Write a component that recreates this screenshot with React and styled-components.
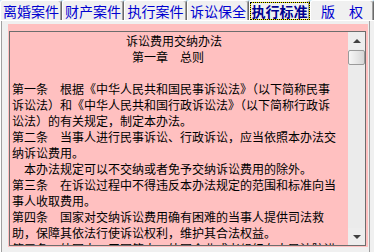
import React from 'react';
import styled, { createGlobalStyle, css } from 'styled-components';

const GlobalStyle = createGlobalStyle`
  html, body {
    margin: 0;
    padding: 0;
  }
  body {
    width: 374px;
    height: 252px;
    overflow: hidden;
    background: #f0f0f0;
    font-family: "Noto Sans CJK SC", "Noto Sans", sans-serif;
  }
`;

const Window = styled.div`
  width: 374px;
  height: 252px;
  display: flex;
  flex-direction: column;
  background: #f0f0f0;
`;

const TabStrip = styled.div`
  display: flex;
  height: 20px;
  flex-shrink: 0;
  background: #c6e6f6;
`;

const Tab = styled.div`
  width: ${({ $w }) => $w}px;
  box-sizing: border-box;
  display: flex;
  align-items: center;
  justify-content: center;
  background: #f0f0f0;
  border-top: 1px solid #ffffff;
  border-left: 1px solid #ffffff;
  border-right: 1px solid #6a6a6a;
  box-shadow: inset -1px 0 0 #a0a0a0;
  border-radius: 3px 3px 0 0;
  color: #0000d0;
  font-size: 14px;
  line-height: 16px;
  white-space: nowrap;
`;

const TabLabel = styled.span`
  padding: 0 1px;
  ${({ $active }) =>
    $active &&
    css`
      font-weight: bold;
      color: #000090;
      outline: 1px dotted #000000;
      box-shadow: 0 0 0 1px #f4f000;
    `}
`;

const Panel = styled.div`
  flex: 1;
  display: flex;
  padding: 4px 6px 5px 8px;
  box-shadow: inset 0 1px 0 #ffffff, inset 1px 0 0 #ffffff, inset 2px 0 0 #a0a0a0,
    inset -4px 0 0 #f0f0f0, inset -5px 0 0 #a0a0a0;
  min-height: 0;
`;

const PinkBox = styled.div`
  flex: 1;
  display: flex;
  background: #ffc0c0;
  padding: 7px 2px 1px 1px;
  min-height: 0;
`;

const TextArea = styled.div`
  flex: 1;
  display: flex;
  border: 1px solid #6d6d6d;
  background: #ffc0c0;
  min-height: 0;
  overflow: hidden;
`;

const TextBody = styled.div`
  flex: 1;
  padding: 1px 0 0 2px;
  overflow: hidden;
  font-size: 12px;
  line-height: 16px;
  color: #000000;
`;

const Line = styled.div`
  height: 16px;
  white-space: nowrap;
  padding-left: ${({ $indent }) => $indent || 0}px;
`;

const ScrollBar = styled.div`
  width: 17px;
  display: flex;
  flex-direction: column;
  background: #ebebeb;
`;

const ArrowButton = styled.div`
  height: 17px;
  display: flex;
  align-items: center;
  justify-content: center;
  background: #ededed;
`;

const Arrow = styled.div`
  width: 0;
  height: 0;
  border-left: 4px solid transparent;
  border-right: 4px solid transparent;
  ${({ $down }) =>
    $down
      ? css`
          border-top: 4px solid #404040;
        `
      : css`
          border-bottom: 4px solid #404040;
        `}
`;

const Thumb = styled.div`
  height: 15px;
  margin: 1px 0 0 0;
  box-sizing: border-box;
  border: 1px solid #9a9a9a;
  border-radius: 2px;
  background: linear-gradient(to right, #f6f6f6, #e4e4e4 60%, #d6d6d6);
`;

const Track = styled.div`
  flex: 1;
`;

const tabs = [
  { label: '离婚案件', w: 62 },
  { label: '财产案件', w: 62 },
  { label: '执行案件', w: 63 },
  { label: '诉讼保全', w: 62 },
  { label: '执行标准', w: 61, active: true },
  { label: '版　权', w: 64 },
];

const lines = [
  { text: '诉讼费用交纳办法', indent: 114 },
  { text: '第一章　总则', indent: 120 },
  { text: '' },
  { text: '第一条　根据《中华人民共和国民事诉讼法》（以下简称民事' },
  { text: '诉讼法）和《中华人民共和国行政诉讼法》（以下简称行政诉' },
  { text: '讼法）的有关规定，制定本办法。' },
  { text: '第二条　当事人进行民事诉讼、行政诉讼，应当依照本办法交' },
  { text: '纳诉讼费用。' },
  { text: '本办法规定可以不交纳或者免予交纳诉讼费用的除外。', indent: 12 },
  { text: '第三条　在诉讼过程中不得违反本办法规定的范围和标准向当' },
  { text: '事人收取费用。' },
  { text: '第四条　国家对交纳诉讼费用确有困难的当事人提供司法救' },
  { text: '助，保障其依法行使诉讼权利，维护其合法权益。' },
  { text: '第五条　外国人、无国籍人、外国企业或者组织在人民法院进' },
];

const App = () => (
  <Window>
    <GlobalStyle />
    <TabStrip>
      {tabs.map((t) => (
        <Tab key={t.label} $w={t.w}>
          <TabLabel $active={t.active}>{t.label}</TabLabel>
        </Tab>
      ))}
    </TabStrip>
    <Panel>
      <PinkBox>
        <TextArea>
          <TextBody>
            {lines.map((l, i) => (
              <Line key={i} $indent={l.indent}>
                {l.text}
              </Line>
            ))}
          </TextBody>
          <ScrollBar>
            <ArrowButton>
              <Arrow />
            </ArrowButton>
            <Thumb />
            <Track />
            <ArrowButton>
              <Arrow $down />
            </ArrowButton>
          </ScrollBar>
        </TextArea>
      </PinkBox>
    </Panel>
  </Window>
);

export default App;
